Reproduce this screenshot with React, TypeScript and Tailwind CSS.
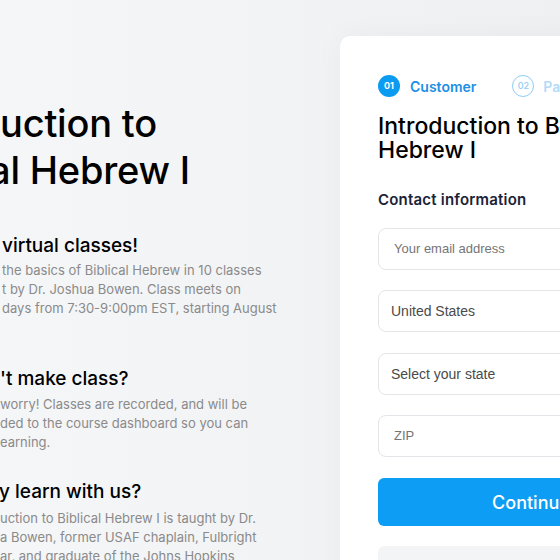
import React from "react";

const poppins = { fontFamily: "Inter, 'Open Sans', sans-serif" };

export default function App() {
  return (
    <div className="w-[560px] h-[560px] overflow-hidden flex bg-gradient-to-r from-[#f5f6f8] to-[#eff0f2]" style={poppins}>
      <div className="w-[340px] shrink-0 pt-[100px] text-black whitespace-nowrap">
        <h1 className="text-[38px] leading-[47px] font-medium tracking-[-0.2px]">
          <div>uction to</div>
          <div className="-ml-[11px]">al Hebrew I</div>
        </h1>
        <h2 className="mt-[40px] pl-[2px] text-[19px] leading-[24px] font-medium">virtual classes!</h2>
        <div className="mt-[3px] pl-[2px] text-[13px] leading-[19px] text-[#8a8a8a]">
          <div>the basics of Biblical Hebrew in 10 classes</div>
          <div>t by Dr. Joshua Bowen. Class meets on</div>
          <div>days from 7:30-9:00pm EST, starting August</div>
          <div>&nbsp;</div>
        </div>
        <h2 className="mt-[30px] text-[19px] leading-[24px] font-medium">'t make class?</h2>
        <div className="mt-[4px] text-[13px] leading-[19px] text-[#8a8a8a]">
          <div>worry! Classes are recorded, and will be</div>
          <div>ded to the course dashboard so you can</div>
          <div>earning.</div>
        </div>
        <h2 className="mt-[28px] -ml-[1px] text-[19px] leading-[24px] font-medium">y learn with us?</h2>
        <div className="mt-[5px] text-[13px] leading-[19px] text-[#8a8a8a]">
          <div>uction to Biblical Hebrew I is taught by Dr.</div>
          <div>a Bowen, former USAF chaplain, Fulbright</div>
          <div>ar, and graduate of the Johns Hopkins</div>
        </div>
      </div>
      <div className="flex-1 min-w-0 pt-[36px]">
        <div className="w-[382px] h-[600px] bg-white rounded-tl-[10px] shadow-[0_0_30px_rgba(0,0,0,0.04)] pl-[38px] pt-[39px]">
          <div className="flex items-center h-[22px] whitespace-nowrap">
            <div className="w-[22px] h-[22px] rounded-full bg-[#0b9bf0] text-white text-[9px] font-bold flex items-center justify-center">01</div>
            <span className="ml-[10px] text-[14px] font-semibold text-[#1d8fe6]">Customer</span>
            <div className="ml-[36px] w-[22px] h-[22px] rounded-full border border-[#8fcdf6] text-[#8fcdf6] text-[9px] font-medium flex items-center justify-center">02</div>
            <span className="ml-[9px] text-[14px] font-semibold text-[#b3dbf7]">Payment</span>
          </div>
          <div className="mt-[17px] text-[23px] leading-[24px] font-medium text-black whitespace-nowrap">
            <div>Introduction to Biblical</div>
            <div>Hebrew I</div>
          </div>
          <div className="mt-[28px] text-[15px] leading-[20px] font-semibold text-[#1a2238] tracking-[0.2px]">Contact information</div>
          <div className="w-[306px]" style={{ fontFamily: "'Liberation Sans', Arial, sans-serif" }}>
            <div className="mt-[18px] h-[42px] rounded-[8px] border border-[#e3e5e8] flex items-center pl-[15px] text-[13px] text-[#757575]">Your email address</div>
            <div className="mt-[20px] h-[42px] rounded-[8px] border border-[#e3e5e8] flex items-center pl-[12px] text-[14px] text-[#4a4a4a]">United States</div>
            <div className="mt-[21px] h-[42px] rounded-[8px] border border-[#e3e5e8] flex items-center pl-[12px] text-[14px] text-[#4a4a4a]">Select your state</div>
            <div className="mt-[20px] h-[42px] rounded-[8px] border border-[#e3e5e8] flex items-center pl-[15px] text-[13px] text-[#757575]">ZIP</div>
          </div>
          <div className="mt-[21px] w-[306px] h-[48px] rounded-[6px] bg-[#0d9df4] text-white text-[18px] font-medium flex items-center justify-center" style={poppins}>Continue</div>
          <div className="mt-[20px] w-[306px] h-[60px] rounded-[6px] bg-[#f3f4f6]"></div>
        </div>
      </div>
    </div>
  );
}
